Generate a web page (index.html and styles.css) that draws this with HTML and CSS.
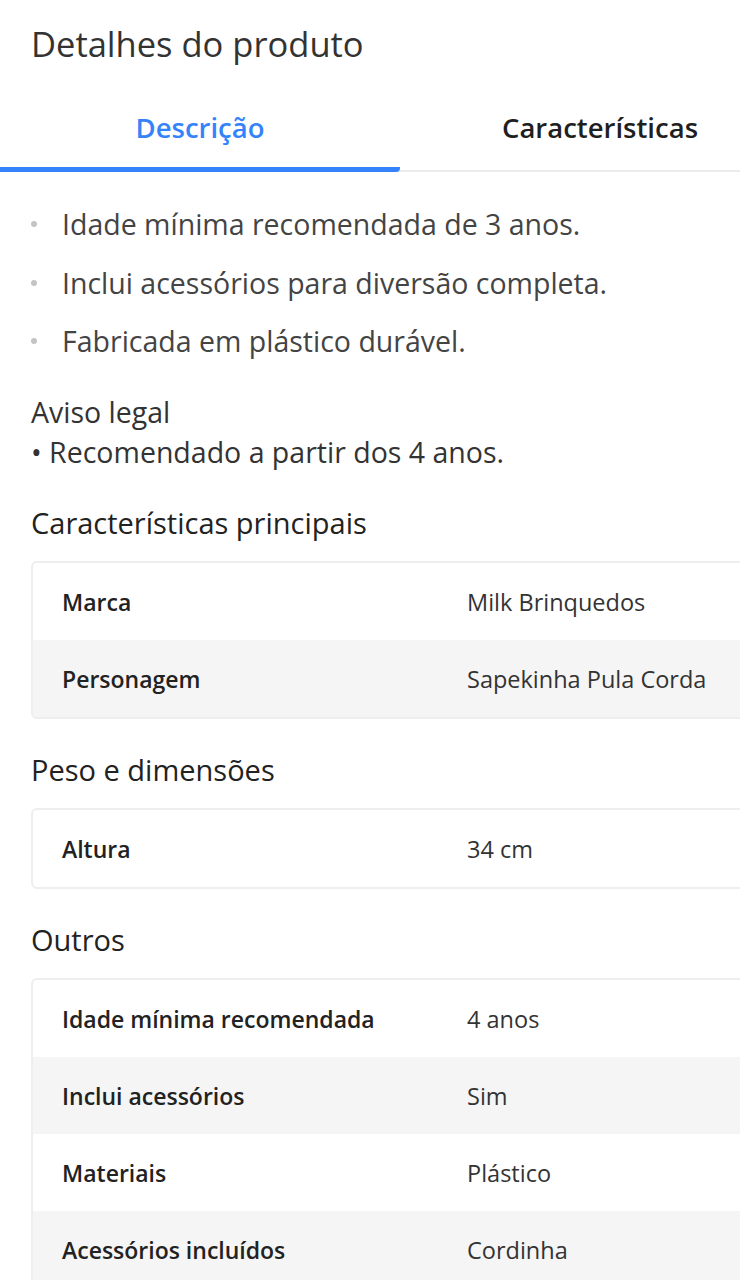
FILE: index.html
```html
<!DOCTYPE html>
<html lang="pt-BR">
<head>
<meta charset="utf-8">
<title>Detalhes do produto</title>
<link rel="stylesheet" href="styles.css">
</head>
<body>
<div class="page">
  <h1 class="title">Detalhes do produto</h1>
  <div class="tabs">
    <div class="tab tab-active">Descrição</div>
    <div class="tab">Características</div>
  </div>
  <ul class="bullets">
    <li>Idade mínima recomendada de 3 anos.</li>
    <li>Inclui acessórios para diversão completa.</li>
    <li>Fabricada em plástico durável.</li>
  </ul>
  <p class="legal">Aviso legal<br>• Recomendado a partir dos 4 anos.</p>

  <h2 class="section">Características principais</h2>
  <div class="spec">
    <div class="row"><div class="label">Marca</div><div class="value">Milk Brinquedos</div></div>
    <div class="row alt"><div class="label">Personagem</div><div class="value">Sapekinha Pula Corda</div></div>
  </div>

  <h2 class="section">Peso e dimensões</h2>
  <div class="spec">
    <div class="row"><div class="label">Altura</div><div class="value">34 cm</div></div>
  </div>

  <h2 class="section">Outros</h2>
  <div class="spec">
    <div class="row"><div class="label">Idade mínima recomendada</div><div class="value">4 anos</div></div>
    <div class="row alt"><div class="label">Inclui acessórios</div><div class="value">Sim</div></div>
    <div class="row"><div class="label">Materiais</div><div class="value">Plástico</div></div>
    <div class="row alt"><div class="label">Acessórios incluídos</div><div class="value">Cordinha</div></div>
  </div>
</div>
</body>
</html>
```
FILE: styles.css
```css
html, body {
  margin: 0;
  padding: 0;
  background: #fff;
  overflow: hidden;
}
body {
  font-family: "Open Sans", "Liberation Sans", sans-serif;
  color: #333;
}
.page {
  width: 800px;
}
.title {
  margin: 0;
  padding: 22px 0 0 31px;
  font-size: 34.5px;
  font-weight: 400;
  line-height: 44px;
  color: #333;
}
.tabs {
  display: flex;
  margin-top: 42px;
  border-bottom: 2px solid #ebebeb;
}
.tab {
  flex: 1;
  text-align: center;
  font-size: 27.5px;
  font-weight: 600;
  line-height: 40px;
  padding-bottom: 19px;
  color: #1f1f1f;
  margin-bottom: -2px;
  border-bottom: 5px solid transparent;
}
.tab-active {
  color: #3483fa;
  border-bottom-color: #3483fa;
  border-radius: 0 4px 4px 0;
}
.bullets {
  list-style: none;
  margin: 32px 0 0 0;
  padding: 0;
}
.bullets li {
  display: flex;
  align-items: center;
  font-size: 28.5px;
  line-height: 40px;
  color: #444;
  margin-bottom: 18.5px;
}
.bullets li::before {
  content: "";
  width: 6px;
  height: 6px;
  border-radius: 50%;
  background: #c4c4c4;
  margin: 0 25px 0 31px;
}
.legal {
  margin: 31px 0 0 31px;
  font-size: 28.5px;
  line-height: 40px;
  color: #333;
}
.section {
  margin: 33px 0 20px 31px;
  font-size: 29px;
  font-weight: 500;
  line-height: 36px;
  color: #222;
}
.spec {
  margin-left: 31px;
  border: 2px solid #eee;
  border-radius: 6px;
  overflow: hidden;
}
.row {
  display: flex;
  align-items: center;
  height: 77px;
  font-size: 23px;
}
.row.alt {
  background: #f5f5f5;
}
.label {
  width: 434px;
  padding-left: 29px;
  box-sizing: border-box;
  font-weight: 600;
  color: #222;
}
.value {
  font-size: 23.5px;
  color: #333;
}
```
